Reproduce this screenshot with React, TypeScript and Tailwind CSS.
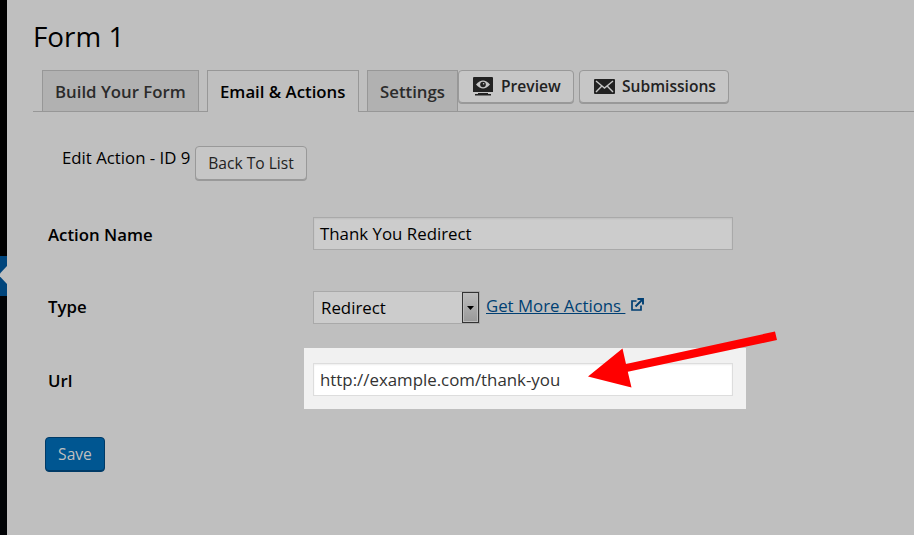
import React from "react";

function PreviewIcon() {
  return (
    <svg width="20" height="19" viewBox="0 0 20 19" className="block shrink-0">
      <path d="M1 0h18a1 1 0 0 1 1 1v14H0V1a1 1 0 0 1 1-1z" fill="#222" />
      <path d="M3 7.600Q6.500 3.600 10 3.600T17 7.600Q13.500 11.600 10 11.600T3 7.600z" fill="#c6c6c6" />
      <circle cx="10" cy="7.500" r="2.800" fill="#222" />
      <circle cx="10.600" cy="6.800" r=".8" fill="#c6c6c6" />
      <path d="M5 16h10v1H5zM2 17h16v1.500H2z" fill="#222" />
    </svg>
  );
}

function MailIcon() {
  return (
    <svg width="21" height="15" viewBox="0 0 21 15" className="block shrink-0">
      <rect width="21" height="15" rx="1" fill="#222" />
      <path d="M2 2l8.500 7L19 2M2 13l5.600-5.800M19 13l-5.600-5.800" fill="none" stroke="#c6c6c6" strokeWidth="1.400" />
    </svg>
  );
}

function ExternalIcon() {
  return (
    <svg width="13" height="13" viewBox="0 0 13 13" className="block">
      <path d="M5.500 3H1v9h9V7.500" fill="none" stroke="#003f73" strokeWidth="1.700" />
      <path d="M4.500 8.500L11 2M6.500 1H12v5.500" fill="none" stroke="#003f73" strokeWidth="1.900" />
    </svg>
  );
}

const field =
  "h-[33px] border px-1.5 flex items-center text-[16.85px] whitespace-nowrap";
const label = "w-[265px] shrink-0 text-[16.8px] font-semibold leading-6";
const tab = "border border-b-0 border-[#979797] px-3 pt-[9px] text-[16.8px] font-semibold leading-6 whitespace-nowrap";
const button =
  "rounded-[4px] border border-[#999] bg-[#c6c6c6] text-[#222] shadow-[0_1px_0_#999] flex items-center text-[15.6px] whitespace-nowrap";

export default function App() {
  return (
    <div className="relative flex h-[535px] w-[914px] overflow-hidden bg-[#bfbfbf] text-black [font-family:'Open_Sans','Noto_Sans',sans-serif]">
      <aside className="h-full w-[7px] shrink-0 bg-[#010306]">
        <div className="h-[256px] bg-black" />
        <div className="h-10 bg-[#00457c]">
          <svg width="7" height="40" viewBox="0 0 7 40" className="block">
            <path d="M7 10L0 17.500V20.500L7 28z" fill="#bfbfbf" />
          </svg>
        </div>
      </aside>
      <main className="min-w-0 flex-1">
        <h1 className="ml-[26px] mt-[17px] h-[38px] text-[27.8px] font-normal leading-[38px]">Form 1</h1>
        <nav className="ml-[26px] mt-[15px] flex h-[42px] items-start border-b border-[#979797] pl-[9px]">
          <div className={`${tab} h-[41px] w-[157px] bg-[#b1b1b1] text-[#2b2b2b]`}>Build Your Form</div>
          <div className={`${tab} ml-2 h-[42px] w-[152px] bg-[#bfbfbf]`}>Email &amp; Actions</div>
          <div className={`${tab} ml-2 h-[41px] w-[91px] bg-[#b1b1b1] text-[#2b2b2b]`}>Settings</div>
          <div className={`${button} h-[33px] w-[116px] gap-2 pl-3.5 font-semibold`}>
            <PreviewIcon />
            <span>Preview</span>
          </div>
          <div className={`${button} ml-[5px] h-[33px] w-[150px] gap-[7px] pl-3.5 font-semibold`}>
            <MailIcon />
            <span>Submissions</span>
          </div>
        </nav>
        <div className="ml-[55px] mt-[34px] flex h-[35px]">
          <span className="w-[133px] whitespace-nowrap text-[16.8px] leading-6">Edit Action - ID 9</span>
          <div className={`${button} h-[34px] w-[112px] justify-center pt-px`}>Back To List</div>
        </div>
        <div className="ml-[41px] mt-[36px] flex h-[33px] items-center">
          <div className={`${label} pt-[3px]`}>Action Name</div>
          <div className={`${field} w-[420px] border-[#a9a9a9] bg-[#cccccc] shadow-[inset_0_1px_2px_rgba(0,0,0,0.07)]`}>Thank You Redirect</div>
        </div>
        <div className="ml-[41px] mt-[41px] flex h-[33px] items-center">
          <div className={`${label} pb-0.5`}>Type</div>
          <div className={`${field} w-[167px] justify-between border-[#a9a9a9] bg-[#cccccc] pl-[7px] pr-0`}>
            <span>Redirect</span>
            <div className="flex h-[31px] w-[17px] items-center justify-center border border-[#333] bg-linear-to-b from-[#bdbdbd] to-[#999] shadow-[inset_0_0_0_1px_#bdbdbd]">
              <svg width="7" height="4" viewBox="0 0 7 4"><path d="M0 0h7L3.500 4z" fill="#000" /></svg>
            </div>
          </div>
          <a className="ml-[6px] h-7 whitespace-pre text-[16.8px] leading-6 text-[#003f73] underline decoration-1 underline-offset-1">{"Get More Actions "}</a>
          <div className="mb-1.5 ml-[6px]"><ExternalIcon /></div>
        </div>
        <div className="ml-[41px] mt-[24px] flex h-[61px] items-center">
          <div className="w-[256px] shrink-0 pt-1 text-[16.8px] font-semibold leading-6">Url</div>
          <div className="flex h-[61px] w-[442px] items-start bg-[#f1f1f1] pl-[9px] pt-[15px]">
            <div className={`${field} w-[420px] border-[#ddd] bg-white text-[#333] shadow-[inset_0_1px_2px_rgba(0,0,0,0.07)]`}>http://example.com/thank-you</div>
          </div>
        </div>
        <div className="ml-[38px] mt-[28px] flex h-[35px] w-[60px] items-center justify-center rounded-[4px] border border-[#003a66] bg-[#005691] text-[15.6px] text-[#bfbfbf] shadow-[inset_0_-1px_0_#003a66]">Save</div>
      </main>
      <svg width="190" height="60" viewBox="0 0 190 60" className="absolute left-[588px] top-[330px]">
        <path d="M0 46.500L34.500 18.500 38 34 187 1.500 189 10 39.800 41.800 43.500 57.500z" fill="#f00" />
      </svg>
    </div>
  );
}
